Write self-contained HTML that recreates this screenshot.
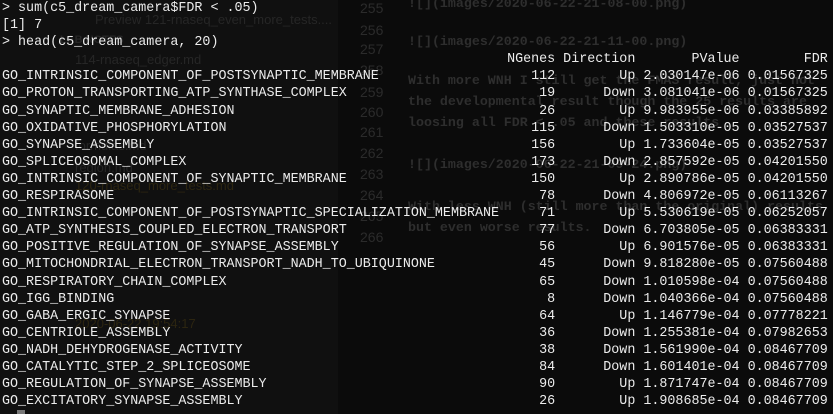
<!DOCTYPE html>
<html><head><meta charset="utf-8"><style>
html,body{margin:0;padding:0;background:#0b0b0b;width:833px;height:414px;overflow:hidden;}
.bg{position:absolute;font-family:"Liberation Sans",sans-serif;font-size:13px;color:#262626;white-space:pre;}
.ln{position:absolute;left:360px;font-family:"Liberation Sans",sans-serif;font-size:14px;color:#2b2b2b;}
.md{position:absolute;left:408px;font-family:"Liberation Mono",monospace;font-size:13.3px;font-weight:bold;color:#2e2e2e;white-space:pre;}
pre{position:absolute;left:2px;top:0px;margin:0;font-family:"Liberation Mono",monospace;font-size:13.36px;line-height:17.1px;color:#ececec;}
.panel{position:absolute;left:0;top:0;width:338px;height:414px;background:#101010;}
</style></head><body>
<div class="panel"></div>
<div class="bg" style="left:95px;top:12px;">Preview 121-rnaseq_even_more_tests....</div>
<div class="bg" style="left:60px;top:34px;font-weight:bold;font-size:11px">LAB NOTES</div>
<div class="bg" style="left:75px;top:52px;">114-rnaseq_edger.md</div>
<div class="bg" style="left:75px;top:138px;">formulas.md</div>
<div class="bg" style="left:75px;top:160px;">region.md</div>
<div class="bg" style="left:75px;top:178px;color:#2c2510">120-rnaseq_more_tests.md</div>
<div class="bg" style="left:75px;top:316px;color:#2c2510">2020-06-22 19:54:17</div>
<div class="ln" style="top:0px">255</div><div class="ln" style="top:22px">256</div>
<div class="ln" style="top:41px">257</div><div class="ln" style="top:62px">258</div>
<div class="ln" style="top:84px">259</div><div class="ln" style="top:104px">260</div>
<div class="ln" style="top:124px">261</div><div class="ln" style="top:145px">262</div>
<div class="ln" style="top:166px">263</div><div class="ln" style="top:187px">264</div>
<div class="ln" style="top:208px">265</div><div class="ln" style="top:229px">266</div>
<div class="md" style="top:-4px">![](images/2020-06-22-21-08-00.png)</div>
<div class="md" style="top:34px">![](images/2020-06-22-21-11-00.png)</div>
<div class="md" style="top:73px">With more WNH I still get the FMAS result, just not</div>
<div class="md" style="top:94px">the developmental result though the 25 results are</div>
<div class="md" style="top:115px">loosing all FDR &lt; .05 and these results</div>
<div class="md" style="top:157px">![](images/2020-06-22-21-09-24.png)</div>
<div class="md" style="top:199px">With less WNH (still more than the original) results</div>
<div class="md" style="top:220px">but even worse results.</div>
<pre>&gt; sum(c5_dream_camera$FDR &lt; .05)
[1] 7
&gt; head(c5_dream_camera, 20)
                                                               NGenes Direction       PValue        FDR
GO_INTRINSIC_COMPONENT_OF_POSTSYNAPTIC_MEMBRANE                   112        Up 2.030147e-06 0.01567325
GO_PROTON_TRANSPORTING_ATP_SYNTHASE_COMPLEX                        19      Down 3.081041e-06 0.01567325
GO_SYNAPTIC_MEMBRANE_ADHESION                                      26        Up 9.983955e-06 0.03385892
GO_OXIDATIVE_PHOSPHORYLATION                                      115      Down 1.503310e-05 0.03527537
GO_SYNAPSE_ASSEMBLY                                               156        Up 1.733604e-05 0.03527537
GO_SPLICEOSOMAL_COMPLEX                                           173      Down 2.857592e-05 0.04201550
GO_INTRINSIC_COMPONENT_OF_SYNAPTIC_MEMBRANE                       150        Up 2.890786e-05 0.04201550
GO_RESPIRASOME                                                     78      Down 4.806972e-05 0.06113267
GO_INTRINSIC_COMPONENT_OF_POSTSYNAPTIC_SPECIALIZATION_MEMBRANE     71        Up 5.530619e-05 0.06252057
GO_ATP_SYNTHESIS_COUPLED_ELECTRON_TRANSPORT                        77      Down 6.703805e-05 0.06383331
GO_POSITIVE_REGULATION_OF_SYNAPSE_ASSEMBLY                         56        Up 6.901576e-05 0.06383331
GO_MITOCHONDRIAL_ELECTRON_TRANSPORT_NADH_TO_UBIQUINONE             45      Down 9.818280e-05 0.07560488
GO_RESPIRATORY_CHAIN_COMPLEX                                       65      Down 1.010598e-04 0.07560488
GO_IGG_BINDING                                                      8      Down 1.040366e-04 0.07560488
GO_GABA_ERGIC_SYNAPSE                                              64        Up 1.146779e-04 0.07778221
GO_CENTRIOLE_ASSEMBLY                                              36      Down 1.255381e-04 0.07982653
GO_NADH_DEHYDROGENASE_ACTIVITY                                     38      Down 1.561990e-04 0.08467709
GO_CATALYTIC_STEP_2_SPLICEOSOME                                    84      Down 1.601401e-04 0.08467709
GO_REGULATION_OF_SYNAPSE_ASSEMBLY                                  90        Up 1.871747e-04 0.08467709
GO_EXCITATORY_SYNAPSE_ASSEMBLY                                     26        Up 1.908685e-04 0.08467709
</pre>
<div style="position:absolute;left:17px;top:410px;width:8px;height:4px;background:#777"></div>
</body></html>
